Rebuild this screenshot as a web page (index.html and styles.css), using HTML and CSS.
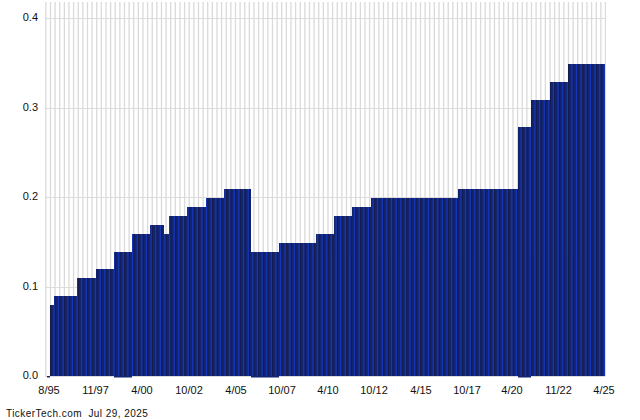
FILE: index.html
```html
<!DOCTYPE html>
<html lang="en">
<head>
<meta charset="utf-8">
<title>Chart</title>
<link rel="stylesheet" href="styles.css">
</head>
<body>
<svg class="chart" width="640" height="420" viewBox="0 0 640 420" xmlns="http://www.w3.org/2000/svg">
  <defs>
    <clipPath id="area-clip">
      <path d="M50 376V305H54V296H77V278H96V269H114V252H132V234H150V225H164V234H169V216H187V207H206V198H224V189H251V252H279V243H316V234H334V216H352V207H371V198H458V189H518V127H531V100H550V82H568V64H605V376Z"/>
    </clipPath>
  </defs>
  <line class="vgrid" x1="45.2" y1="189" x2="606" y2="189"/>
  <g class="hgrid">
    <line x1="45" y1="18.500" x2="605" y2="18.500"/>
    <line x1="45" y1="108.500" x2="605" y2="108.500"/>
    <line x1="45" y1="197.500" x2="605" y2="197.500"/>
    <line x1="45" y1="287.500" x2="605" y2="287.500"/>
    <line x1="45" y1="376.500" x2="605" y2="376.500"/>
  </g>
  <path class="under" d="M47 376h3v1.500h-3zM114 376h18v1.500h-18zM251 376h28v1.500h-28zM518 376h13v1.500h-13z"/>
  <g clip-path="url(#area-clip)">
    <rect class="bar-base" x="50" y="60" width="555" height="316"/>
    <line class="bar-dark" x1="50" y1="218" x2="605" y2="218"/>
    <line class="bar-light" x1="53.300" y1="218" x2="605" y2="218"/>
  </g>
  <g class="axis-y">
    <text x="38" y="21">0.4</text>
    <text x="38" y="111">0.3</text>
    <text x="38" y="200">0.2</text>
    <text x="38" y="290">0.1</text>
    <text x="38" y="379">0.0</text>
  </g>
  <g class="axis-x">
    <text x="49" y="394">8/95</text>
    <text x="95.500" y="394">11/97</text>
    <text x="142" y="394">4/00</text>
    <text x="189" y="394">10/02</text>
    <text x="236" y="394">4/05</text>
    <text x="282" y="394">10/07</text>
    <text x="328" y="394">4/10</text>
    <text x="374" y="394">10/12</text>
    <text x="421" y="394">4/15</text>
    <text x="467" y="394">10/17</text>
    <text x="512" y="394">4/20</text>
    <text x="558.500" y="394">11/22</text>
    <text x="604" y="394">4/25</text>
  </g>
  <text class="credit" x="6" y="417">TickerTech.com  Jul 29, 2025</text>
</svg>
</body>
</html>
```
FILE: styles.css
```css
html, body {
  margin: 0;
  padding: 0;
  background: #ffffff;
}
.chart {
  display: block;
  font-family: "Liberation Sans", Arial, sans-serif;
  font-size: 11px;
  fill: #111111;
}
.vgrid {
  stroke: #dadada;
  stroke-width: 374px;
  stroke-dasharray: 1.3 3.325;
}
.hgrid line {
  stroke: #dcdcdc;
  stroke-width: 1;
}
.bar-base { fill: #13256f; }
.bar-dark {
  stroke: #141d4d;
  stroke-width: 316px;
  stroke-dasharray: 1.3 3.325;
}
.bar-light {
  stroke: #1836b4;
  stroke-width: 316px;
  stroke-dasharray: 1.3 3.325;
}
.under { fill: #13256f; }
.axis-y text { text-anchor: end; }
.axis-x text { text-anchor: middle; }
.credit {
  font-size: 10px;
  letter-spacing: 0.45px;
  white-space: pre;
}
```
